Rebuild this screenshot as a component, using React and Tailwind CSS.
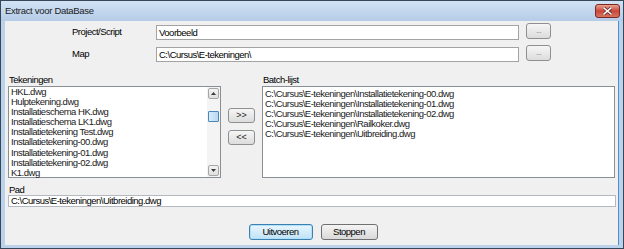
import React from 'react';

const tekeningen = [
  'HKL.dwg',
  'Hulptekening.dwg',
  'Installatieschema HK.dwg',
  'Installatieschema LK1.dwg',
  'Installatietekening Test.dwg',
  'Installatietekening-00.dwg',
  'Installatietekening-01.dwg',
  'Installatietekening-02.dwg',
  'K1.dwg',
];

const batch = [
  'C:\\Cursus\\E-tekeningen\\Installatietekening-00.dwg',
  'C:\\Cursus\\E-tekeningen\\Installatietekening-01.dwg',
  'C:\\Cursus\\E-tekeningen\\Installatietekening-02.dwg',
  'C:\\Cursus\\E-tekeningen\\Railkoker.dwg',
  'C:\\Cursus\\E-tekeningen\\Uitbreiding.dwg',
];

const font = { fontFamily: '"Liberation Sans", Arial, sans-serif' };

function DotsButton() {
  return (
    <button className="ml-[7px] w-[25px] h-[16px] rounded-[3px] border border-[#8e8f8f] bg-gradient-to-b from-[#f6f6f6] to-[#dcdcdc] flex items-center justify-center pb-[1px]">
      <span className="text-[8px] leading-none text-[#7a7a9a] tracking-[-0.5px]">...</span>
    </button>
  );
}

function ArrowBox({ down }) {
  return (
    <div className="w-[11px] h-[11px] rounded-[2px] border border-[#a6a6a6] bg-gradient-to-b from-[#f4f4f4] to-[#dedede] flex items-center justify-center">
      <svg width="5" height="3" viewBox="0 0 5 3">
        {down ? <path d="M0 0 H5 L2.5 3 Z" fill="#3a3a3a" /> : <path d="M0 3 H5 L2.5 0 Z" fill="#3a3a3a" />}
      </svg>
    </div>
  );
}

export default function App() {
  return (
    <div className="w-[624px] h-[249px] flex flex-col bg-[#bcd1ea] border border-[#36475a] overflow-hidden text-black text-[9.5px] tracking-[-0.5px]" style={font}>
      {/* Title bar */}
      <div className="h-[20px] relative flex items-center pl-[4px] bg-gradient-to-b from-[#d2e2f4] to-[#b5cce8]">
        <span className="text-[9.5px] leading-none tracking-[-0.3px] text-[#1b1b1b]">Extract voor DataBase</span>
        <div className="absolute right-[3px] top-[3px] w-[25px] h-[14px] rounded-[3px] border border-[#7a2a22] bg-gradient-to-b from-[#e8a08e] via-[#c9463a] to-[#d6735c] flex items-center justify-center">
          <svg width="9" height="8" viewBox="0 0 9 8">
            <path d="M1 1 L8 7 M8 1 L1 7" stroke="#5a2020" strokeWidth="3" strokeLinecap="square" />
            <path d="M1 1 L8 7 M8 1 L1 7" stroke="#ffffff" strokeWidth="1.6" strokeLinecap="square" />
          </svg>
        </div>
      </div>

      {/* Content */}
      <div className="flex-1 mx-[4px] mb-[3px] bg-[#f0f0f0] border-r border-[#4a8fd0] flex flex-col pl-[3px]">
        <div className="flex items-center mt-[2px] h-[16px]">
          <span className="ml-[64px] w-[84px] leading-[10px] pt-[2px]">Project/Script</span>
          <div className="mt-[3px] w-[363px] h-[15px] border border-[#a3a3a3] bg-white flex items-center pl-[2px] leading-none">Voorbeeld</div>
          <DotsButton />
        </div>
        <div className="flex items-center mt-[6px] h-[16px]">
          <span className="ml-[64px] w-[84px] leading-[10px] pt-[2px]">Map</span>
          <div className="mt-[3px] w-[363px] h-[15px] border border-[#a3a3a3] bg-white flex items-center pl-[2px] leading-none">C:\Cursus\E-tekeningen\</div>
          <DotsButton />
        </div>

        <div className="flex mt-[14px] leading-[10px]">
          <span className="w-[254px] pl-[1px]">Tekeningen</span>
          <span className="pl-[1px]">Batch-lijst</span>
        </div>

        <div className="flex mt-[1px] h-[92px]">
          <div className="w-[213px] border border-[#8a8f96] bg-white flex">
            <div className="flex-1 pl-[2px] leading-[10.1px] text-[#1a1a1a]">
              {tekeningen.map((t) => (
                <div key={t} className="whitespace-nowrap">{t}</div>
              ))}
            </div>
            <div className="w-[13px] bg-[#f4f4f4] flex flex-col items-center pt-[1px] pb-[1px] pr-[1px]">
              <ArrowBox />
              <div className="mt-[12px] w-[11px] h-[11px] rounded-[1px] border border-[#4a86b8] bg-gradient-to-r from-[#d9ecfa] to-[#b7d9f3]" />
              <div className="flex-1" />
              <ArrowBox down />
            </div>
          </div>

          <div className="ml-[7px] w-[27px] flex flex-col pt-[22px]">
            <button className="h-[15px] rounded-[3px] border border-[#8e8f8f] bg-gradient-to-b from-[#f6f6f6] to-[#dcdcdc] text-[9px] leading-none tracking-[0px] text-[#222]">&gt;&gt;</button>
            <button className="mt-[7px] h-[15px] rounded-[3px] border border-[#8e8f8f] bg-gradient-to-b from-[#f6f6f6] to-[#dcdcdc] text-[9px] leading-none tracking-[0px] text-[#222]">&lt;&lt;</button>
          </div>

          <div className="ml-[7px] w-[353px] border border-[#8a8f96] bg-white pl-[2px] pt-[2px] leading-[10.1px] text-[#1a1a1a]">
            {batch.map((b) => (
              <div key={b} className="whitespace-nowrap">{b}</div>
            ))}
          </div>
        </div>

        <span className="mt-[7px] pl-[1px] leading-[10px]">Pad</span>
        <div className="w-[608px] h-[12px] border border-[#b4b8c0] bg-white flex items-center pl-[2px] leading-none">C:\Cursus\E-tekeningen\Uitbreiding.dwg</div>

        <div className="flex justify-center gap-[8px] mt-[17px]">
          <button className="w-[64px] h-[16px] rounded-[3px] border border-[#3c7fb1] bg-gradient-to-b from-[#e9f6fd] to-[#bfe3f7] shadow-[inset_0_0_0_1px_#aee0f8] leading-none">Uitvoeren</button>
          <button className="w-[57px] h-[16px] rounded-[3px] border border-[#707070] bg-gradient-to-b from-[#f4f4f4] to-[#d9d9d9] leading-none">Stoppen</button>
        </div>
      </div>
    </div>
  );
}
